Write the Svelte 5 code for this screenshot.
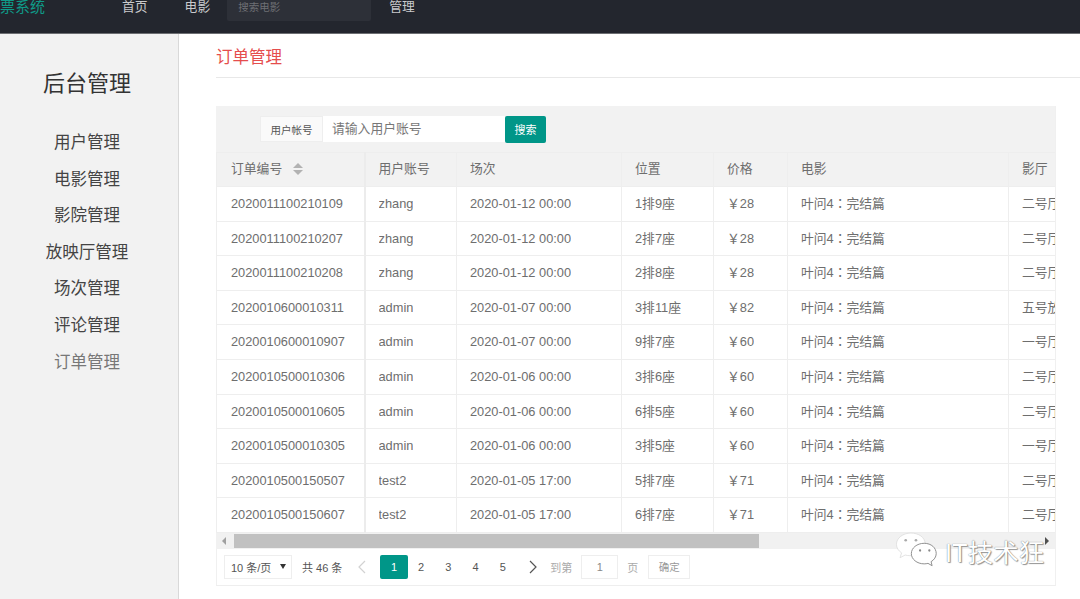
<script>
  const navItems = [
    { label: "用户管理" },
    { label: "电影管理" },
    { label: "影院管理" },
    { label: "放映厅管理" },
    { label: "场次管理" },
    { label: "评论管理" },
    { label: "订单管理", active: true },
  ];

  const columns = [
    { key: "id", label: "订单编号", width: 148, sort: true },
    { key: "user", label: "用户账号", width: 92 },
    { key: "time", label: "场次", width: 165 },
    { key: "seat", label: "位置", width: 92 },
    { key: "price", label: "价格", width: 74 },
    { key: "movie", label: "电影", width: 221 },
    { key: "hall", label: "影厅", width: 80 },
  ];

  const movie = "叶问4：完结篇";
  const orders = [
    ["2020011100210109", "zhang", "2020-01-12 00:00", "1排9座", "￥28", movie, "二号厅"],
    ["2020011100210207", "zhang", "2020-01-12 00:00", "2排7座", "￥28", movie, "二号厅"],
    ["2020011100210208", "zhang", "2020-01-12 00:00", "2排8座", "￥28", movie, "二号厅"],
    ["2020010600010311", "admin", "2020-01-07 00:00", "3排11座", "￥82", movie, "五号放映厅"],
    ["2020010600010907", "admin", "2020-01-07 00:00", "9排7座", "￥60", movie, "一号厅"],
    ["2020010500010306", "admin", "2020-01-06 00:00", "3排6座", "￥60", movie, "二号厅"],
    ["2020010500010605", "admin", "2020-01-06 00:00", "6排5座", "￥60", movie, "二号厅"],
    ["2020010500010305", "admin", "2020-01-06 00:00", "3排5座", "￥60", movie, "一号厅"],
    ["2020010500150507", "test2", "2020-01-05 17:00", "5排7座", "￥71", movie, "二号厅"],
    ["2020010500150607", "test2", "2020-01-05 17:00", "6排7座", "￥71", movie, "二号厅"],
  ];

  const pages = [1, 2, 3, 4, 5];
</script>

<div class="page">
  <header class="topbar">
    <div class="topbar-inner">
      <span class="logo">票系统</span>
      <span class="top-link first">首页</span>
      <span class="top-link second">电影</span>
      <span class="top-search">搜索电影</span>
      <span class="top-link">管理</span>
    </div>
  </header>

  <div class="body">
    <aside class="sidebar">
      <h2>后台管理</h2>
      <ul>
        {#each navItems as item}
          <li class:active={item.active}>{item.label}</li>
        {/each}
      </ul>
    </aside>

    <main class="content">
      <div class="title">订单管理</div>

      <section class="panel">
        <div class="toolbar">
          <span class="field-label">用户帐号</span>
          <span class="field-input">请输入用户账号</span>
          <button class="search-btn">搜索</button>
        </div>

        <div class="table-wrap">
          <table>
            <colgroup>
              {#each columns as col}
                <col style="width: {col.width}px" />
              {/each}
            </colgroup>
            <thead>
              <tr>
                {#each columns as col}
                  <th>
                    <span class="cell">{col.label}</span>
                    {#if col.sort}
                      <span class="sort">
                        <i class="up"></i>
                        <i class="down"></i>
                      </span>
                    {/if}
                  </th>
                {/each}
              </tr>
            </thead>
            <tbody>
              {#each orders as row}
                <tr>
                  {#each row as value, i}
                    <td class:movie={columns[i].key === "movie"}><span class="cell">{value}</span></td>
                  {/each}
                </tr>
              {/each}
            </tbody>
          </table>
        </div>

        <div class="scrollbar">
          <span class="arrow left"></span>
          <span class="thumb"></span>
          <span class="arrow right"></span>
        </div>

        <div class="pager">
          <span class="limit">10 条/页 <i></i></span>
          <span class="count">共 46 条</span>
          <svg class="chev" width="10" height="14" viewBox="0 0 10 14">
            <path d="M8 1 2 7l6 6" fill="none" stroke="#d2d2d2" stroke-width="1.2" />
          </svg>
          {#each pages as p}
            <span class="page-num" class:current={p === 1}>{p}</span>
          {/each}
          <svg class="chev next" width="10" height="14" viewBox="0 0 10 14">
            <path d="M2 1l6 6-6 6" fill="none" stroke="#555" stroke-width="1.2" />
          </svg>
          <span class="skip">到第</span>
          <span class="skip-input">1</span>
          <span class="skip">页</span>
          <span class="skip-btn">确定</span>
        </div>
      </section>
    </main>
  </div>

  <!-- watermark sits over the scrollbar corner -->
  <div class="watermark">
    <svg width="44" height="37" viewBox="0 0 42 36">
      <path d="M15 1C7.500 1 1 5.800 1 12c0 3.500 2 6.300 5 8.300L4.500 25l5-2.600c1.400.4 3 .6 4.500.6 6 0 15-4 15-11S22.500 1 15 1z" fill="#fff" stroke="#ddd" stroke-width=".8" />
      <path d="M28 11c-7 0-12.500 4.500-12.500 10S21 31 28 31c1.300 0 2.500-.2 3.700-.5l4 2.300-1-3.900c3-1.800 5-4.700 5-7.900 0-5.500-4.700-10-11.700-10z" fill="#fff" stroke="#888" stroke-width=".9" />
      <circle cx="10" cy="8" r="1.300" fill="#aaa" />
      <circle cx="20" cy="8" r="1.300" fill="#aaa" />
      <circle cx="24" cy="18" r="1.100" fill="#888" />
      <circle cx="33" cy="18" r="1.100" fill="#888" />
    </svg>
    <span>IT技术狂</span>
  </div>
</div>

<style>
  :global(body) {
    margin: 0;
    background: #fff;
  }

  .page {
    position: relative;
    width: 1080px;
    height: 599px;
    overflow: hidden;
    font-family: "Liberation Sans", "Noto Sans CJK SC", sans-serif;
    font-size: 12.8px;
    color: #6e6e6e;
  }

  .topbar {
    height: 33px;
    background: #23262e;
    border-bottom: 1px solid #6c6e72;
    overflow: hidden;
  }

  .topbar-inner {
    display: flex;
    align-items: center;
    height: 33px;
    margin-top: -11px;
  }

  .logo {
    width: 122px;
    color: #0f9a88;
    font-size: 15px;
    white-space: nowrap;
  }

  .top-link {
    color: #c9cacc;
    font-size: 12.8px;
  }

  .first {
    margin-right: 37px;
  }

  .second {
    margin-right: 17px;
  }

  .top-search {
    box-sizing: border-box;
    width: 144px;
    height: 31px;
    margin-right: 18px;
    padding: 9px 11px 0;
    background: #2d3038;
    border-radius: 2px;
    color: #6d6f74;
    font-size: 10.5px;
  }

  .body {
    display: flex;
    height: 565px;
  }

  .sidebar {
    box-sizing: border-box;
    flex: 0 0 179px;
    padding-right: 4px;
    background: #f2f2f2;
    border-right: 1px solid #d9d9d9;
    text-align: center;
    color: #444;
  }

  .sidebar h2 {
    margin: 34px 0 24px;
    font-size: 22px;
    font-weight: 400;
    line-height: 32px;
    color: #333;
  }

  .sidebar ul {
    margin: 0;
    padding: 0;
    list-style: none;
  }

  .sidebar li {
    height: 36.6px;
    line-height: 36.6px;
    font-size: 16.5px;
  }

  .sidebar li.active {
    color: #777;
  }

  .content {
    flex: 1;
    min-width: 0;
    padding-left: 37px;
  }

  .title {
    height: 43px;
    line-height: 47px;
    border-bottom: 1px solid #e8e8e8;
    color: #e54d4d;
    font-size: 16.5px;
  }

  .panel {
    width: 840px;
    margin-top: 28px;
    border-bottom: 1px solid #eee;
    border-right: 1px solid #f0f0f0;
    box-sizing: border-box;
  }

  .toolbar {
    display: flex;
    align-items: center;
    height: 46px;
    padding-left: 44px;
    box-sizing: border-box;
    background: #f2f2f2;
  }

  .field-label {
    box-sizing: border-box;
    width: 63px;
    height: 26px;
    line-height: 26px;
    background: #fafafa;
    border: 1px solid #eee;
    text-align: center;
    font-size: 10.5px;
    color: #555;
  }

  .field-input {
    box-sizing: border-box;
    width: 182px;
    height: 26px;
    line-height: 26px;
    padding-left: 9px;
    background: #fff;
    color: #777;
    font-size: 12.8px;
  }

  .search-btn {
    width: 41px;
    height: 27px;
    padding: 0;
    border: 0;
    border-radius: 2px;
    background: #009688;
    color: #fff;
    font: inherit;
    font-size: 11px;
  }

  .table-wrap {
    overflow: hidden;
  }

  table {
    table-layout: fixed;
    width: 872px;
    border-collapse: collapse;
    border-left: 1px solid #f0f0f0;
  }

  th,
  td {
    height: 34.6px;
    padding: 0 14px 0 13px;
    border: 1px solid #eee;
    box-sizing: border-box;
    text-align: left;
    font-weight: 400;
    white-space: nowrap;
  }

  th {
    background: #f2f2f2;
    height: 34px;
    padding-bottom: 2px;
  }

  th:first-child,
  td:first-child {
    padding-left: 14px;
    border-right: 2px solid #ececec;
  }

  td.movie {
    font-family: "Liberation Sans", "Noto Sans CJK TC", sans-serif;
  }

  .cell {
    display: inline-block;
    max-width: 100%;
    overflow: hidden;
    line-height: 16px;
    vertical-align: middle;
  }

  .sort {
    display: inline-flex;
    flex-direction: column;
    gap: 2px;
    margin-left: 7px;
    vertical-align: middle;
  }

  .sort i {
    width: 0;
    height: 0;
    border-left: 5px solid transparent;
    border-right: 5px solid transparent;
  }

  .sort .up {
    border-bottom: 5px solid #b2b2b2;
  }

  .sort .down {
    border-top: 5px solid #b2b2b2;
  }

  .scrollbar {
    position: relative;
    height: 16px;
    background: #f1f1f1;
  }

  .thumb {
    position: absolute;
    left: 18px;
    top: 1px;
    width: 525px;
    height: 14px;
    background: #c1c1c1;
  }

  .arrow {
    position: absolute;
    top: 4px;
    width: 0;
    height: 0;
    border-top: 4px solid transparent;
    border-bottom: 4px solid transparent;
  }

  .arrow.left {
    left: 6px;
    border-right: 4px solid #a0a0a0;
  }

  .arrow.right {
    right: 6px;
    border-left: 4px solid #505050;
  }

  .pager {
    display: flex;
    align-items: center;
    height: 36px;
    padding-left: 7px;
    border-left: 1px solid #f0f0f0;
    font-size: 11px;
  }

  .limit {
    display: flex;
    align-items: center;
    box-sizing: border-box;
    width: 68px;
    height: 24px;
    padding-left: 6px;
    border: 1px solid #eee;
    color: #555;
    white-space: nowrap;
  }

  .limit i {
    margin-left: 9px;
    border-left: 3px solid transparent;
    border-right: 3px solid transparent;
    border-top: 5px solid #333;
  }

  .count {
    margin: 0 15px 0 10px;
    color: #555;
  }

  .chev {
    margin-right: 13px;
  }

  .chev.next {
    margin: 0 12px 0 12px;
  }

  .page-num {
    width: 27.2px;
    height: 24px;
    line-height: 24px;
    text-align: center;
    color: #555;
  }

  .page-num.current {
    background: #009688;
    color: #fff;
    border-radius: 2px;
  }

  .skip {
    color: #aaa;
  }

  .skip-input {
    box-sizing: border-box;
    width: 37px;
    height: 24px;
    margin: 0 9px;
    line-height: 22px;
    border: 1px solid #eee;
    text-align: center;
    color: #888;
  }

  .skip-btn {
    box-sizing: border-box;
    width: 42px;
    height: 24px;
    margin-left: 10px;
    line-height: 22px;
    border: 1px solid #eee;
    text-align: center;
    color: #999;
    font-size: 10.5px;
  }

  .watermark {
    position: absolute;
    left: 895px;
    top: 532px;
    display: flex;
    align-items: center;
    gap: 6px;
    color: #fff;
    font-size: 25.5px;
    text-shadow: 0 0 1px #666, 1px 1px 1px #999;
  }
</style>
